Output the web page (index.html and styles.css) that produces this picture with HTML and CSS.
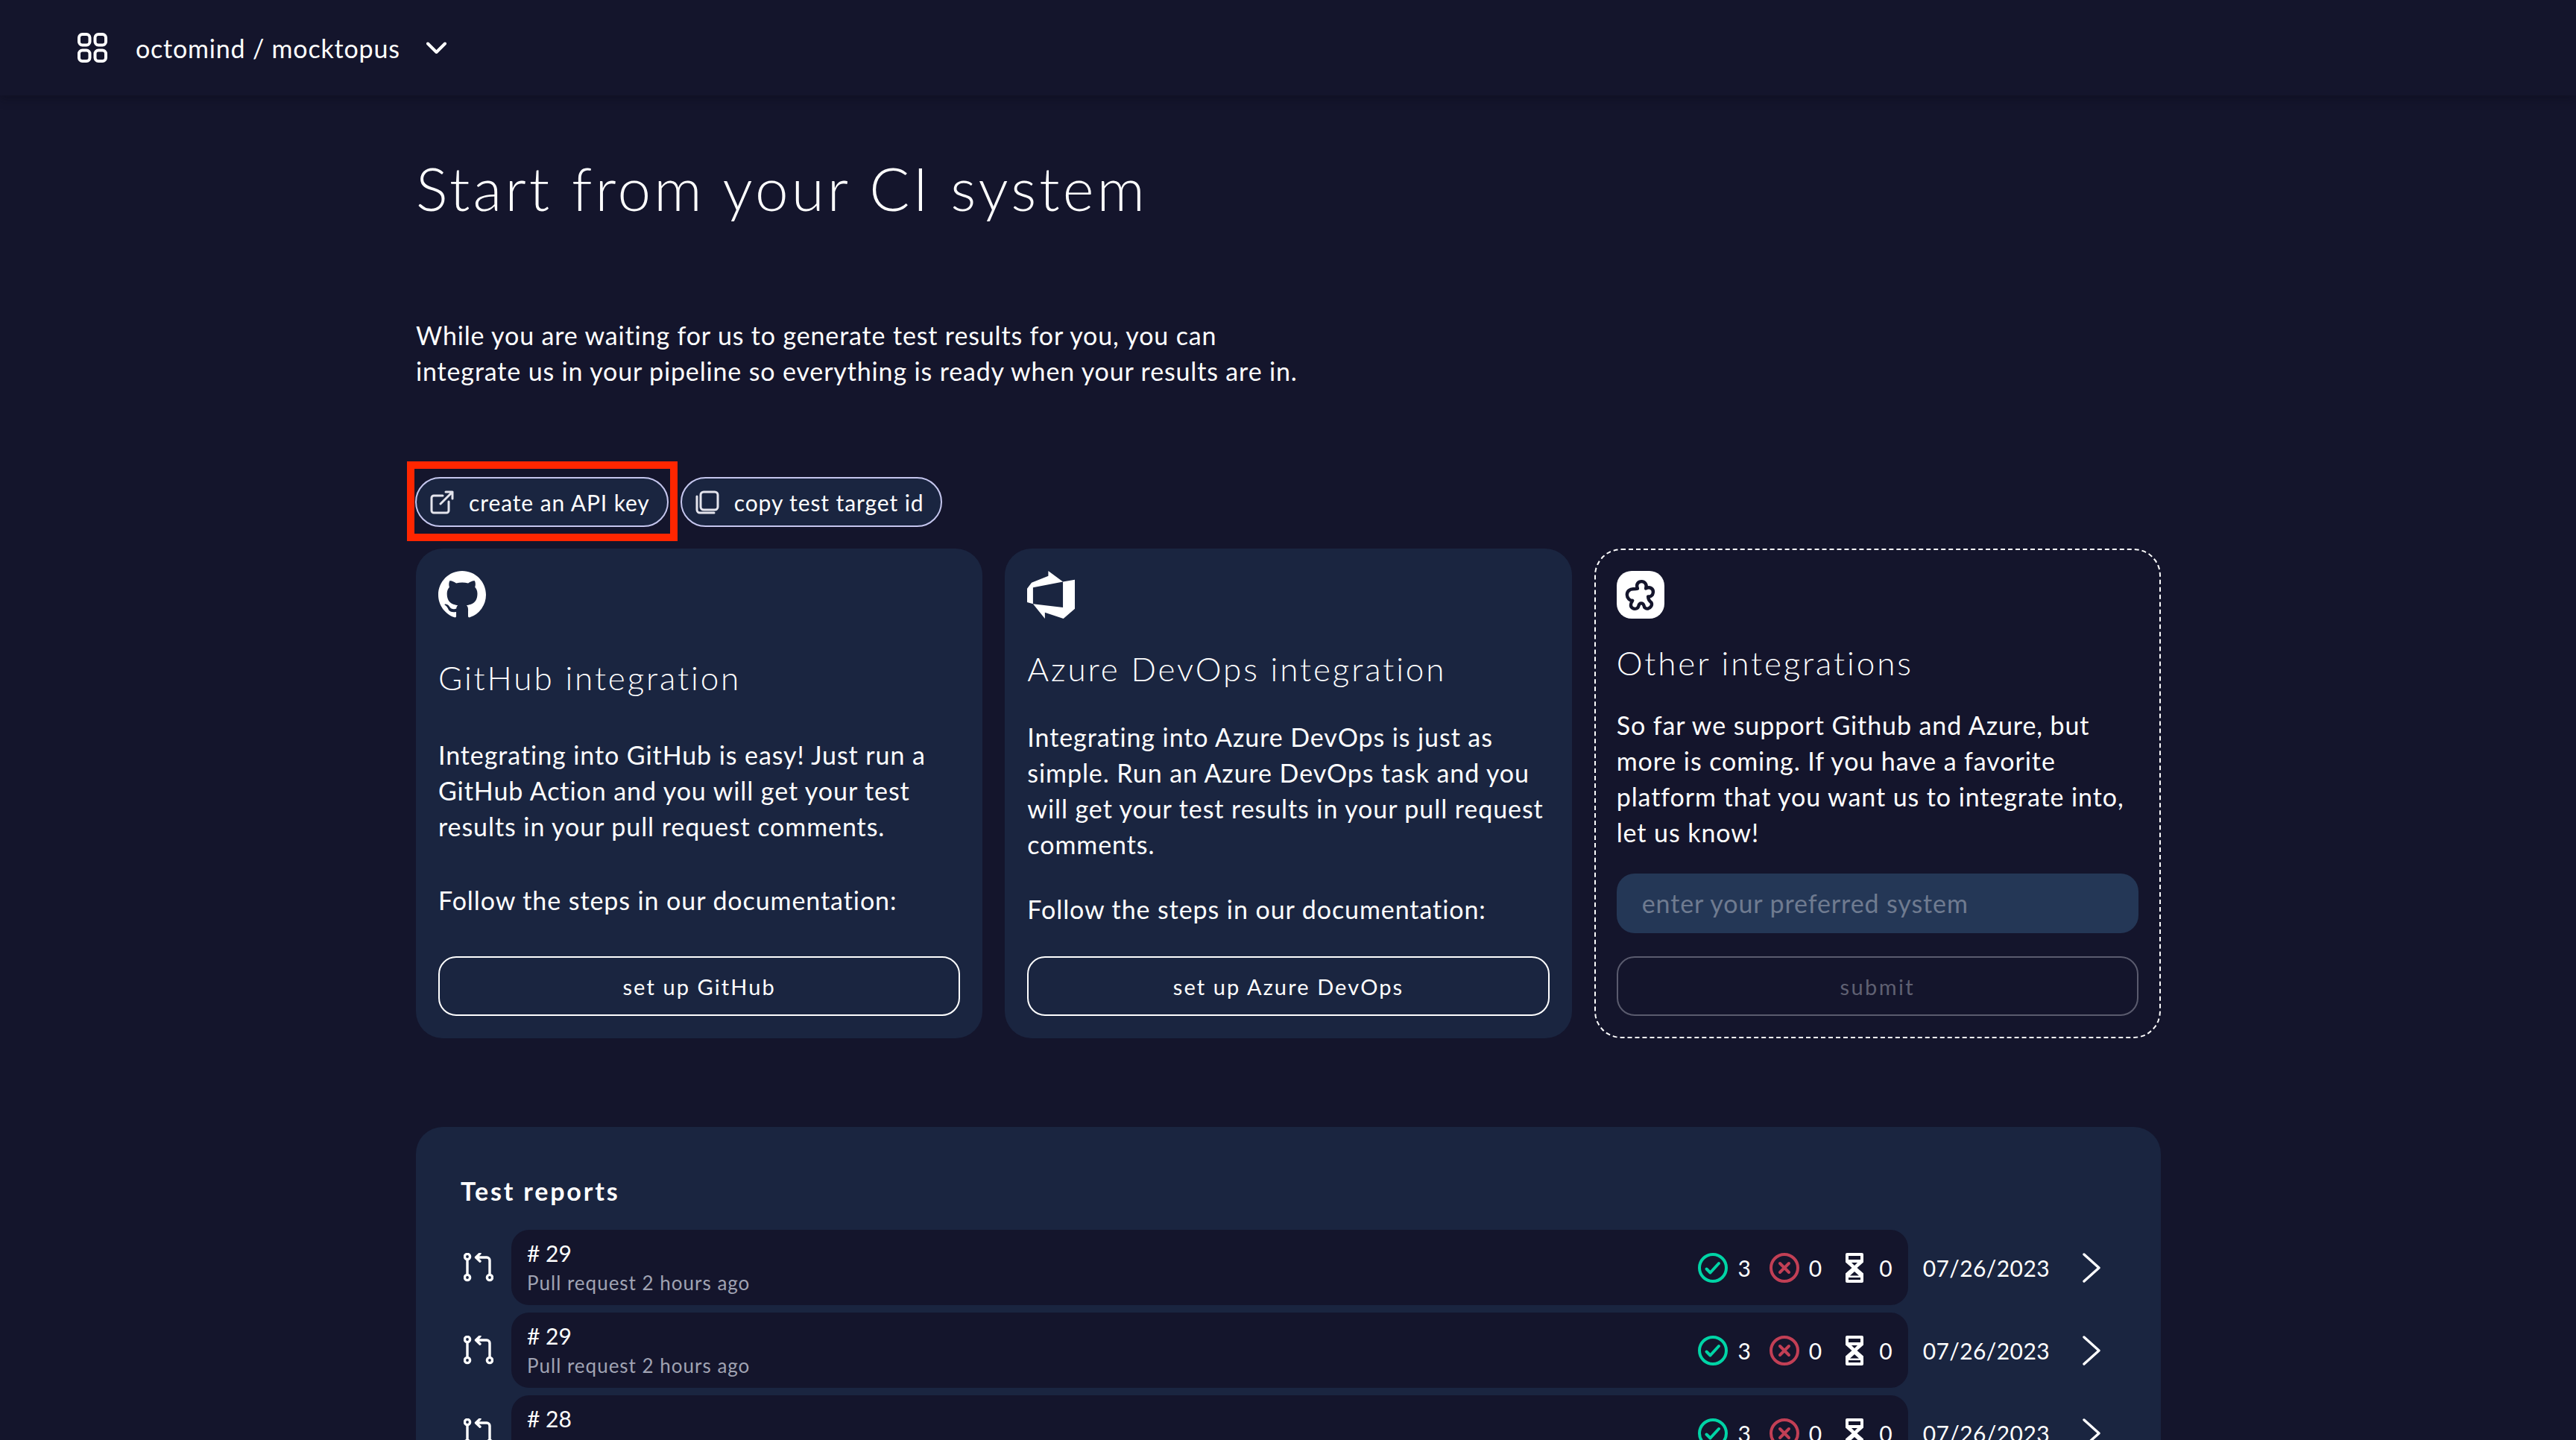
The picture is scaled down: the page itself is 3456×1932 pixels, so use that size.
FILE: index.html
```html
<!DOCTYPE html>
<html lang="en">

<head>
    <meta charset="utf-8">
    <meta name="viewport" content="width=device-width, initial-scale=1.0">
    <title>Start from your CI system</title>
    <link rel="stylesheet" href="styles.css">
</head>

<body>
    <header class="topbar">
        <svg class="topbar-grid" viewBox="0 0 40 40" fill="none" stroke="currentColor" stroke-width="4">
            <rect x="2" y="2" width="14.5" height="14.5" rx="4.5" />
            <rect x="23.5" y="2" width="14.5" height="14.5" rx="4.5" />
            <rect x="2" y="23.5" width="14.5" height="14.5" rx="4.5" />
            <rect x="23.5" y="23.5" width="14.5" height="14.5" rx="4.5" />
        </svg>
        <span class="topbar-name">octomind / mocktopus</span>
        <svg class="topbar-caret" viewBox="0 0 27 16" fill="none" stroke="currentColor" stroke-width="4" stroke-linecap="round" stroke-linejoin="round">
            <path d="M2 2.5l11.5 11.5L25 2.5" />
        </svg>
    </header>

    <main class="content">
        <h1 class="title">Start from your CI system</h1>
        <p class="intro">While you are waiting for us to generate test results for you, you can<br>integrate us in your pipeline so everything is ready when your results are in.</p>

        <div class="actions">
            <div class="chip-wrap">
                <button class="chip">
                    <svg class="chip-icon" viewBox="0 0 32 32" fill="none" stroke="#e4e4ec" stroke-width="3" stroke-linecap="round" stroke-linejoin="round">
                        <path d="M17 7H5a3 3 0 0 0-3 3v17a3 3 0 0 0 3 3h17a3 3 0 0 0 3-3V15" />
                        <path d="M14 18L30 2M21 2h9v9" />
                    </svg>
                    create an API key
                </button>
                <span class="highlight"></span>
            </div>
            <button class="chip">
                <svg class="chip-icon" viewBox="0 0 32 32" fill="none" stroke="#e4e4ec" stroke-width="3" stroke-linecap="round" stroke-linejoin="round">
                    <rect x="7" y="2" width="23" height="24" rx="4" />
                    <path d="M2 8v18a4 4 0 0 0 4 4h19" />
                </svg>
                copy test target id
            </button>
        </div>

        <section class="cards">
            <article class="card">
                <svg class="card-icon" viewBox="0 0 16 16" fill="#fff">
                    <path d="M8 0C3.58 0 0 3.58 0 8c0 3.54 2.29 6.53 5.47 7.59.4.07.55-.17.55-.38 0-.19-.01-.82-.01-1.49-2.01.37-2.53-.49-2.69-.94-.09-.23-.48-.94-.82-1.13-.28-.15-.68-.52-.01-.53.63-.01 1.08.58 1.23.82.72 1.21 1.87.87 2.33.66.07-.52.28-.87.51-1.07-1.78-.2-3.64-.89-3.64-3.95 0-.87.31-1.59.82-2.15-.08-.2-.36-1.02.08-2.12 0 0 .67-.21 2.2.82.64-.18 1.32-.27 2-.27.68 0 1.36.09 2 .27 1.53-1.04 2.2-.82 2.2-.82.44 1.1.16 1.92.08 2.12.51.56.82 1.27.82 2.15 0 3.07-1.87 3.75-3.65 3.95.29.25.54.73.54 1.48 0 1.07-.01 1.93-.01 2.2 0 .21.15.46.55.38A8.013 8.013 0 0 0 16 8c0-4.42-3.58-8-8-8z" />
                </svg>
                <h3 class="card-title">GitHub integration</h3>
                <p class="card-text">Integrating into GitHub is easy! Just run a<br>GitHub Action and you will get your test<br>results in your pull request comments.</p>
                <p class="card-text">Follow the steps in our documentation:</p>
                <button class="card-btn">set up GitHub</button>
            </article>

            <article class="card">
                <svg class="card-icon" viewBox="0 0 24 24" fill="#fff">
                    <path d="M0 8.877L2.247 5.91l8.405-3.416V.022l7.37 5.393L2.966 8.338v8.225L0 15.707zm24-4.45v14.651l-5.753 4.9-9.303-3.057v3.056l-5.978-7.416 15.057 1.798V5.415z" />
                </svg>
                <h3 class="card-title">Azure DevOps integration</h3>
                <p class="card-text">Integrating into Azure DevOps is just as<br>simple. Run an Azure DevOps task and you<br>will get your test results in your pull request<br>comments.</p>
                <p class="card-text">Follow the steps in our documentation:</p>
                <button class="card-btn">set up Azure DevOps</button>
            </article>

            <article class="card card-other">
                <span class="puzzle-box">
                    <svg class="puzzle" viewBox="25 20 190 190" fill="none" stroke="#14152c" stroke-width="13" stroke-linejoin="round">
                        <path d="M108 90C100 72 112 62 124 62C138 62 147 76 141 90C155 80 172 90 170 106C169 118 158 124 150 122C150 132 155 140 163 146C168 156 160 167 150 170C142 172 134 165 134 160C130 145 115 145 112 160C110 170 98 174 88 168C78 162 80 150 88 138C78 140 66 128 66 115C66 100 78 92 90 92C96 92 102 92 108 90Z" />
                    </svg>
                </span>
                <h3 class="card-title">Other integrations</h3>
                <p class="card-text">So far we support Github and Azure, but<br>more is coming. If you have a favorite<br>platform that you want us to integrate into,<br>let us know!</p>
                <input class="card-input" type="text" placeholder="enter your preferred system">
                <button class="card-btn card-btn-off" disabled>submit</button>
            </article>
        </section>

        <section class="reports">
            <h4 class="reports-title">Test reports</h4>
            <div class="report-list">
                <div class="report">
                    <svg class="pr-icon" viewBox="0 0 40 40" fill="none" stroke="#fff" stroke-width="3.4" stroke-linecap="round" stroke-linejoin="round">
                        <circle cx="5" cy="5" r="3.6" /><circle cx="5" cy="33" r="3.6" /><circle cx="35" cy="33" r="3.6" />
                        <path d="M5 9v20M35 29V10a4 4 0 0 0-4-4H17M22 .8L16.5 6l5.5 5.2" />
                    </svg>
                    <div class="report-row">
                        <div class="report-info">
                            <div class="report-num"># 29</div>
                            <div class="report-sub">Pull request 2 hours ago</div>
                        </div>
                        <div class="report-stats">
                            <svg class="stat-icon" viewBox="0 0 40 40" fill="none" stroke="#00d4a6" stroke-width="4" stroke-linecap="round" stroke-linejoin="round"><circle cx="20" cy="20" r="18" /><path d="M11.5 21.5l5 5L28 14" /></svg>
                            <span class="stat-num">3</span>
                            <svg class="stat-icon stat-fail" viewBox="0 0 40 40" fill="none" stroke="#c23f55" stroke-width="4" stroke-linecap="round"><circle cx="20" cy="20" r="18" /><path d="M14 14l12 12M26 14L14 26" /></svg>
                            <span class="stat-num">0</span>
                            <svg class="stat-glass" viewBox="0 0 24 40" fill="#fff"><path d="M2 0h20a2 2 0 0 1 2 2v10.5L15.5 20l8.5 7.5V38a2 2 0 0 1-2 2H2a2 2 0 0 1-2-2V27.5L8.5 20 0 12.5V2a2 2 0 0 1 2-2zM4 4v5h16V4zM8 13l4 4 4-4zM12 25l-6 5.500h12zM4 33v3h16v-3z" fill-rule="evenodd" /></svg>
                            <span class="stat-num stat-last">0</span>
                        </div>
                    </div>
                    <span class="report-date">07/26/2023</span>
                    <svg class="report-go" viewBox="0 0 24 40" fill="none" stroke="#fff" stroke-width="3.4" stroke-linecap="round" stroke-linejoin="round"><path d="M2 2l20 18L2 38" /></svg>
                </div>
                <div class="report">
                    <svg class="pr-icon" viewBox="0 0 40 40" fill="none" stroke="#fff" stroke-width="3.4" stroke-linecap="round" stroke-linejoin="round">
                        <circle cx="5" cy="5" r="3.6" /><circle cx="5" cy="33" r="3.6" /><circle cx="35" cy="33" r="3.6" />
                        <path d="M5 9v20M35 29V10a4 4 0 0 0-4-4H17M22 .8L16.5 6l5.5 5.2" />
                    </svg>
                    <div class="report-row">
                        <div class="report-info">
                            <div class="report-num"># 29</div>
                            <div class="report-sub">Pull request 2 hours ago</div>
                        </div>
                        <div class="report-stats">
                            <svg class="stat-icon" viewBox="0 0 40 40" fill="none" stroke="#00d4a6" stroke-width="4" stroke-linecap="round" stroke-linejoin="round"><circle cx="20" cy="20" r="18" /><path d="M11.5 21.5l5 5L28 14" /></svg>
                            <span class="stat-num">3</span>
                            <svg class="stat-icon stat-fail" viewBox="0 0 40 40" fill="none" stroke="#c23f55" stroke-width="4" stroke-linecap="round"><circle cx="20" cy="20" r="18" /><path d="M14 14l12 12M26 14L14 26" /></svg>
                            <span class="stat-num">0</span>
                            <svg class="stat-glass" viewBox="0 0 24 40" fill="#fff"><path d="M2 0h20a2 2 0 0 1 2 2v10.5L15.5 20l8.5 7.5V38a2 2 0 0 1-2 2H2a2 2 0 0 1-2-2V27.5L8.5 20 0 12.5V2a2 2 0 0 1 2-2zM4 4v5h16V4zM8 13l4 4 4-4zM12 25l-6 5.500h12zM4 33v3h16v-3z" fill-rule="evenodd" /></svg>
                            <span class="stat-num stat-last">0</span>
                        </div>
                    </div>
                    <span class="report-date">07/26/2023</span>
                    <svg class="report-go" viewBox="0 0 24 40" fill="none" stroke="#fff" stroke-width="3.4" stroke-linecap="round" stroke-linejoin="round"><path d="M2 2l20 18L2 38" /></svg>
                </div>
                <div class="report">
                    <svg class="pr-icon" viewBox="0 0 40 40" fill="none" stroke="#fff" stroke-width="3.4" stroke-linecap="round" stroke-linejoin="round">
                        <circle cx="5" cy="5" r="3.6" /><circle cx="5" cy="33" r="3.6" /><circle cx="35" cy="33" r="3.6" />
                        <path d="M5 9v20M35 29V10a4 4 0 0 0-4-4H17M22 .8L16.5 6l5.5 5.2" />
                    </svg>
                    <div class="report-row">
                        <div class="report-info">
                            <div class="report-num"># 28</div>
                            <div class="report-sub">Pull request 2 hours ago</div>
                        </div>
                        <div class="report-stats">
                            <svg class="stat-icon" viewBox="0 0 40 40" fill="none" stroke="#00d4a6" stroke-width="4" stroke-linecap="round" stroke-linejoin="round"><circle cx="20" cy="20" r="18" /><path d="M11.5 21.5l5 5L28 14" /></svg>
                            <span class="stat-num">3</span>
                            <svg class="stat-icon stat-fail" viewBox="0 0 40 40" fill="none" stroke="#c23f55" stroke-width="4" stroke-linecap="round"><circle cx="20" cy="20" r="18" /><path d="M14 14l12 12M26 14L14 26" /></svg>
                            <span class="stat-num">0</span>
                            <svg class="stat-glass" viewBox="0 0 24 40" fill="#fff"><path d="M2 0h20a2 2 0 0 1 2 2v10.5L15.5 20l8.5 7.5V38a2 2 0 0 1-2 2H2a2 2 0 0 1-2-2V27.5L8.5 20 0 12.5V2a2 2 0 0 1 2-2zM4 4v5h16V4zM8 13l4 4 4-4zM12 25l-6 5.500h12zM4 33v3h16v-3z" fill-rule="evenodd" /></svg>
                            <span class="stat-num stat-last">0</span>
                        </div>
                    </div>
                    <span class="report-date">07/26/2023</span>
                    <svg class="report-go" viewBox="0 0 24 40" fill="none" stroke="#fff" stroke-width="3.4" stroke-linecap="round" stroke-linejoin="round"><path d="M2 2l20 18L2 38" /></svg>
                </div>
            </div>
        </section>
    </main>
</body>

</html>
```

FILE: styles.css
```css
:root {
    --bg: #14152c;
    --panel: #1a2540;
    --input: #243756;
    --white: #ffffff;
    --muted: #a0a3b3;
}

*,
::before,
::after {
    box-sizing: border-box;
    padding: 0;
    margin: 0;
}

html,
body {
    height: 100%;
    overflow: hidden;
}

body {
    display: flex;
    flex-direction: column;
    background: var(--bg);
    color: var(--white);
    font-family: "Lato", "Open Sans", sans-serif;
}

.topbar {
    flex: none;
    display: flex;
    align-items: center;
    height: 128px;
    padding: 0 0 0 104px;
    box-shadow: 0 4px 12px rgba(10, 10, 24, 0.45);
}

.topbar-grid {
    width: 40px;
    height: 40px;
    color: var(--white);
}

.topbar-name {
    margin-left: 38px;
    font-size: 34px;
    font-weight: 400;
    letter-spacing: 0.8px;
}

.topbar-caret {
    width: 27px;
    height: 16px;
    margin-left: 35px;
}

.content {
    flex: 1;
    min-height: 0;
    width: 2341px;
    margin-left: 558px;
}

.title {
    margin-top: 72px;
    font-size: 80px;
    line-height: 104px;
    font-weight: 300;
    letter-spacing: 4.1px;
}

.intro {
    margin-top: 122px;
    font-size: 34px;
    line-height: 48px;
    font-weight: 400;
    letter-spacing: 0.85px;
}

.actions {
    display: flex;
    gap: 16px;
    margin: 118px 0 0 -1px;
}

.chip-wrap {
    position: relative;
}

.chip {
    display: flex;
    align-items: center;
    gap: 20px;
    height: 67px;
    padding: 0 23px 0 18px;
    background: var(--panel);
    border: 2px solid #c5c6ee;
    border-radius: 34px;
    color: var(--white);
    font-family: inherit;
    font-size: 30px;
    font-weight: 400;
    letter-spacing: 0.9px;
}

.chip-icon {
    width: 32px;
    height: 32px;
}

.highlight {
    position: absolute;
    left: -11px;
    right: -12px;
    top: -21px;
    bottom: -19px;
    border: 10px solid #ff2600;
}

.cards {
    display: grid;
    grid-template-columns: repeat(3, 1fr);
    gap: 30px;
    margin-top: 29px;
    height: 657px;
}

.card {
    display: flex;
    flex-direction: column;
    justify-content: space-between;
    padding: 30px;
    background: var(--panel);
    border-radius: 36px;
}

.card-other {
    background: none;
    border: 2px dashed var(--white);
    padding: 28px;
}

.card-icon,
.puzzle-box {
    display: block;
    width: 64px;
    height: 64px;
}

.puzzle-box {
    background: var(--white);
    border-radius: 20px;
}

.puzzle {
    display: block;
    width: 64px;
    height: 64px;
}

.card-title {
    font-size: 44px;
    line-height: 56px;
    font-weight: 300;
    letter-spacing: 2.9px;
}

.card-text {
    font-size: 34px;
    line-height: 48px;
    font-weight: 400;
    letter-spacing: 0.92px;
}

.card-btn {
    height: 80px;
    background: transparent;
    border: 2px solid var(--white);
    border-radius: 24px;
    color: var(--white);
    font-family: inherit;
    font-size: 29px;
    font-weight: 400;
    letter-spacing: 2.1px;
}

.card-btn-off {
    border-color: #5a5b6e;
    color: #5f6072;
    letter-spacing: 2.4px;
}

.card-input {
    height: 80px;
    padding: 0 34px;
    background: var(--input);
    border: 0;
    border-radius: 24px;
    color: var(--white);
    font-family: inherit;
    font-size: 34px;
    font-weight: 400;
    letter-spacing: 0.9px;
}

.card-input::placeholder {
    color: #6f7b90;
}

.reports {
    margin-top: 119px;
    padding: 62px 60px 40px;
    min-height: 600px;
    background: var(--panel);
    border-radius: 36px;
}

.reports-title {
    font-size: 34px;
    line-height: 48px;
    font-weight: 700;
    letter-spacing: 2.8px;
}

.report-list {
    display: flex;
    flex-direction: column;
    gap: 10px;
    margin-top: 28px;
}

.report {
    display: flex;
    align-items: center;
}

.pr-icon {
    flex: none;
    width: 40px;
    height: 40px;
    margin: 0 24px 0 4px;
}

.report-row {
    flex: 1;
    display: flex;
    align-items: center;
    justify-content: space-between;
    height: 101px;
    padding: 0 21px;
    background: var(--bg);
    border-radius: 24px;
}

.report-num {
    font-size: 30px;
    line-height: 40px;
    font-weight: 400;
}

.report-sub {
    font-size: 26px;
    line-height: 40px;
    font-weight: 400;
    letter-spacing: 1px;
    color: var(--muted);
}

.report-stats {
    display: flex;
    align-items: center;
}

.stat-icon {
    width: 40px;
    height: 40px;
}

.stat-fail {
    margin-left: 25px;
}

.stat-glass {
    width: 24px;
    height: 40px;
    margin-left: 32px;
}

.stat-num {
    margin-left: 13px;
    font-size: 30px;
    font-weight: 400;
}

.stat-last {
    margin-left: 21px;
}

.report-date {
    margin-left: 20px;
    font-size: 30px;
    font-weight: 400;
    letter-spacing: 0.4px;
}

.report-go {
    width: 24px;
    height: 40px;
    margin-left: 44px;
    margin-right: 21px;
}
```
